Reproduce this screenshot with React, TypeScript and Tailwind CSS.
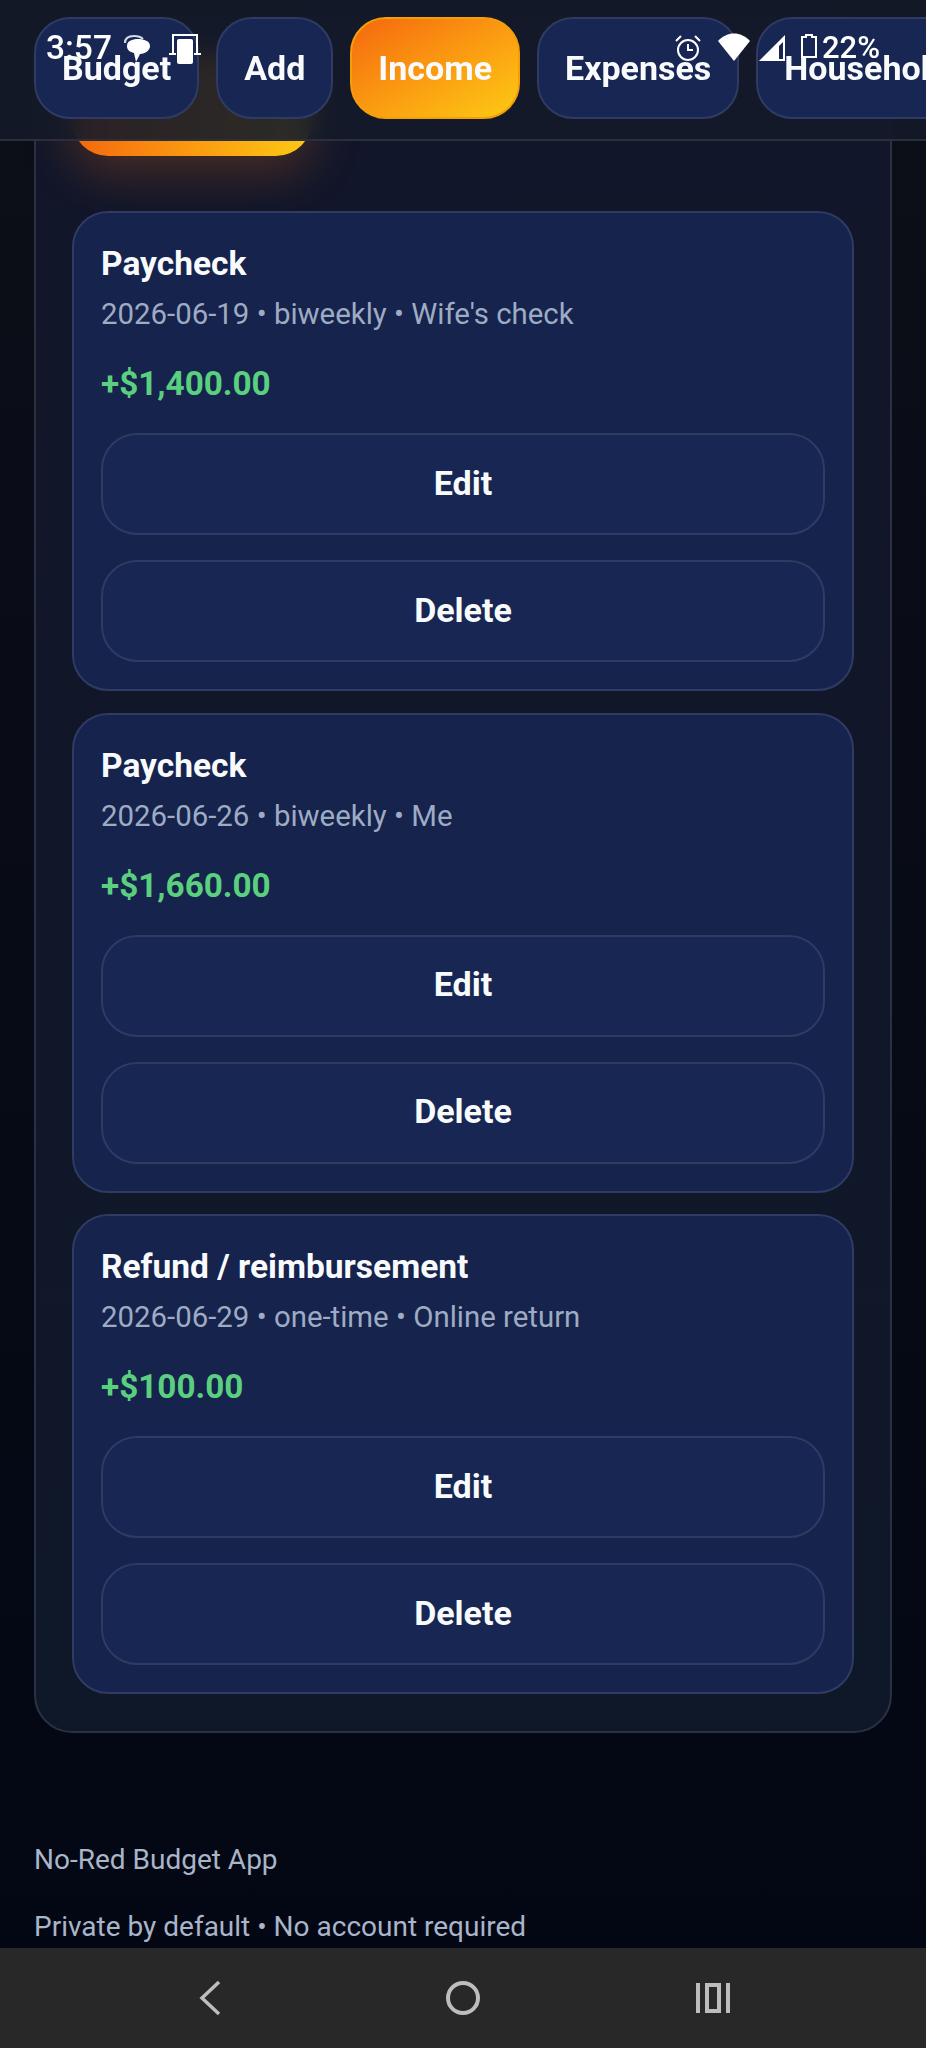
const items = [
  { title: "Paycheck", meta: "2026-06-19 • biweekly • Wife's check", amount: "+$1,400.00" },
  { title: "Paycheck", meta: "2026-06-26 • biweekly • Me", amount: "+$1,660.00" },
  { title: "Refund / reimbursement", meta: "2026-06-29 • one-time • Online return", amount: "+$100.00" },
];

function NavPill({ label, active }: { label: string; active?: boolean }) {
  return (
    <div
      className={
        active
          ? "h-[102px] shrink-0 flex items-center justify-center px-[26px] rounded-[36px] border-2 border-[#f59e0b] bg-gradient-to-br from-[#f4660e] to-[#fcca14] text-[34px] font-bold text-[#f8fafc]"
          : "h-[102px] shrink-0 flex items-center justify-center px-[26px] rounded-[36px] border-2 border-[#2f3b63] bg-[#172652] text-[34px] font-bold text-[#f8fafc]"
      }
    >
      {label}
    </div>
  );
}

function ActionButton({ label }: { label: string }) {
  return (
    <div className="h-[102px] flex items-center justify-center pb-[2px] rounded-[36px] border-2 border-[#2f3b63] bg-[#172652] text-[34px] font-bold text-[#f8fafc]">
      {label}
    </div>
  );
}

function StatusBar() {
  return (
    <div className="absolute top-0 left-0 w-[926px] h-[96px] z-20 text-white">
      <div className="absolute left-[46px] top-[29px] flex items-center">
        <span className="text-[33.5px] font-medium leading-[38px]">3:57</span>
        <svg width="27" height="28" viewBox="0 0 27 28" className="ml-[12px] mt-[2px]" fill="#fff">
          <path d="M1 8 C1 3 5 1 10 1 C14 1 17 2 19 4" fill="none" stroke="#d8dce6" strokeWidth="2" />
          <path d="M3 11 C3 6 8 4 14 4 C20 4 26 6 26 11 C26 16 20 19 16 19 L12 27 L10 18 C6 17 3 15 3 11 Z" />
        </svg>
        <svg width="32" height="30" viewBox="0 0 32 30" className="ml-[18px] mt-[2px]" fill="none">
          <path d="M4 20 V1 H28 V20" stroke="#fff" strokeWidth="2" />
          <path d="M0 20 H7 M25 20 H32" stroke="#fff" strokeWidth="2" />
          <rect x="8" y="5" width="16" height="25" rx="2" fill="#fff" />
        </svg>
      </div>
      <div className="absolute right-[46px] top-[29px] flex items-center">
        <svg width="26" height="26" viewBox="0 0 26 26" fill="none" stroke="#fff" strokeWidth="2" className="mr-[17px]">
          <circle cx="13" cy="15" r="10" />
          <path d="M13 9 V15 H18 M1 6 L6 1 M25 6 L20 1" />
        </svg>
        <svg width="32" height="28" viewBox="0 0 32 28" fill="#fff" className="mr-[9px] mt-[-2px]">
          <path d="M0 8 C9 -2 23 -2 32 8 L16 28 Z" />
        </svg>
        <svg width="27" height="26" viewBox="0 0 27 26" fill="none" className="mr-[15px]">
          <path d="M0 26 L26 0 V26 Z M24 7 L20 11 V24 H24 Z" fill="#fff" fillRule="evenodd" />
        </svg>
        <svg width="16" height="24" viewBox="0 0 16 24" fill="none" className="mr-[5px] mt-[-4px]">
          <path d="M5 1 H11 V3 H15 V23 H1 V3 H5 Z" stroke="#fff" strokeWidth="2" />
        </svg>
        <span className="text-[31px] font-medium leading-[38px]">22%</span>
      </div>
    </div>
  );
}

export default function App() {
  return (
    <div className="relative w-[926px] h-[2048px] overflow-hidden flex flex-col bg-gradient-to-b from-[#0d0f18] to-[#030713] font-['Roboto',sans-serif]">
      <StatusBar />
      <header className="absolute top-0 left-0 w-[926px] h-[141px] z-10 border-b-2 border-[#2a2f3d] bg-[#141a29]/90 backdrop-blur-[12px] flex items-start pt-[17px] pl-[34px] gap-[17px] overflow-hidden">
        <NavPill label="Budget" />
        <NavPill label="Add" />
        <NavPill label="Income" active />
        <NavPill label="Expenses" />
        <NavPill label="Household" />
      </header>

      <main className="flex-1 min-h-0 overflow-hidden px-[34px] pt-[18px]">
        <section className="rounded-[38px] border-2 border-[#2a3145] bg-gradient-to-b from-[#12162a] to-[#0f1828] px-[36px] pt-[36px] pb-[37px]">
          <div className="w-[240px] h-[100px] rounded-[36px] bg-gradient-to-r from-[#f4660e] to-[#fcca14] shadow-[0_16px_48px_rgba(249,115,22,0.25)]" />
          <div className="mt-[55px] flex flex-col gap-[21.5px]">
            {items.map((it, i) => (
              <article key={i} className="h-[480px] rounded-[36px] border-2 border-[#2f3b63] bg-[#15234d] px-[27px] pt-[28px]">
                <div className="text-[33.5px] font-bold leading-[46px] text-[#f8fafc]">{it.title}</div>
                <div className="mt-[4px] text-[29.4px] leading-[46px] text-[#9eabc2]">{it.meta}</div>
                <div className="mt-[24px] text-[33.3px] font-bold leading-[46px] text-[#5ad07f]">{it.amount}</div>
                <div className="mt-[26px] flex flex-col gap-[25px]">
                  <ActionButton label="Edit" />
                  <ActionButton label="Delete" />
                </div>
              </article>
            ))}
          </div>
        </section>
        <footer className="mt-[107px] text-[28px] text-[#a9b5c9]">
          <div className="leading-[40px]">No-Red Budget App</div>
          <div className="mt-[27px] leading-[40px]">Private by default • No account required</div>
        </footer>
      </main>

      <nav className="h-[100px] shrink-0 bg-[#282828] flex items-center justify-center relative z-10">
        <div className="flex items-center w-[536px] justify-between">
          <svg width="36" height="36" viewBox="0 0 36 36" fill="none" stroke="#bdbdbd" strokeWidth="3.5">
            <path d="M24 2 L7 18 L24 34" />
          </svg>
          <svg width="36" height="36" viewBox="0 0 36 36" fill="none" stroke="#bdbdbd" strokeWidth="4">
            <circle cx="18" cy="18" r="15" />
          </svg>
          <svg width="36" height="36" viewBox="0 0 36 36" fill="#bdbdbd">
            <rect x="1" y="3" width="4" height="30" />
            <path fillRule="evenodd" d="M10 3 H26 V33 H10 Z M14 7 V29 H22 V7 Z" />
            <rect x="31" y="3" width="4" height="30" />
          </svg>
        </div>
      </nav>
    </div>
  );
}
